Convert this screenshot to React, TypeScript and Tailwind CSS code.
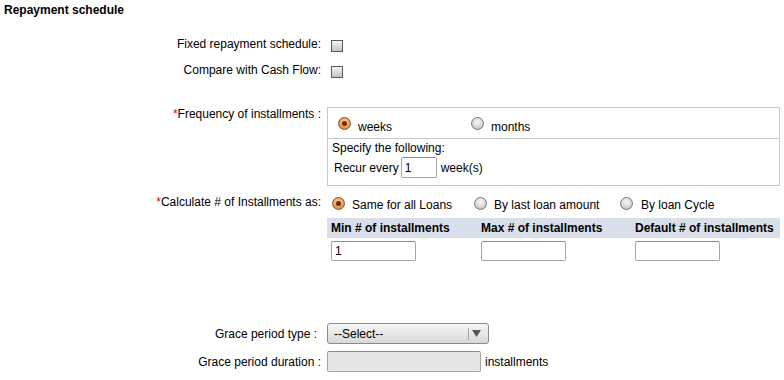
import React from "react";

const Radio = ({ checked }: { checked?: boolean }) =>
  checked ? (
    <span className="relative block h-[13px] w-[13px] shrink-0 rounded-full border border-[#6e5a4a] bg-[radial-gradient(circle_at_50%_40%,#ffd9b5,#f08a3a_70%,#c9661f)]">
      <span className="absolute left-[3px] top-[3px] h-[5px] w-[5px] rounded-full bg-[#6a2c05]" />
    </span>
  ) : (
    <span className="block h-[13px] w-[13px] shrink-0 rounded-full border border-[#767676] bg-[radial-gradient(circle_at_50%_35%,#fafafa,#d4d4d4_60%,#b0b0b0)]" />
  );

const Checkbox = () => (
  <span className="block h-[12px] w-[12px] shrink-0 border border-[#5a5a5a] bg-[linear-gradient(#f4f4f4,#c4c4c4)]" />
);

const TextBox = ({ value, className }: { value?: string; className: string }) => (
  <div
    className={
      "box-border flex items-center rounded-[2px] border border-[#a5a5a5] border-t-[#8a8a8a] bg-white pl-[3px] " +
      className
    }
  >
    {value}
  </div>
);

export default function App() {
  return (
    <div
      className="relative h-[380px] w-[784px] overflow-hidden bg-white text-[12px] leading-[14px] text-black"
      style={{ fontFamily: '"Liberation Sans", Arial, sans-serif' }}
    >
      <div className="h-[14px] pl-[4px] mt-[3px] font-bold">Repayment schedule</div>

      {/* Fixed repayment schedule */}
      <div className="mt-[20px] flex h-[15px] items-start">
        <div className="w-[321px] text-right">Fixed repayment schedule:</div>
        <div className="ml-[10px] mt-[3px]">
          <Checkbox />
        </div>
      </div>

      {/* Compare with cash flow */}
      <div className="mt-[11px] flex h-[15px] items-start">
        <div className="w-[321px] text-right">Compare with Cash Flow:</div>
        <div className="ml-[10px] mt-[3px]">
          <Checkbox />
        </div>
      </div>

      {/* Frequency */}
      <div className="mt-[29px] flex items-start">
        <div className="w-[321px] text-right">
          <span className="text-[#e00000]">*</span>Frequency of installments :
        </div>
        <div className="ml-[6px] box-border h-[79px] w-[453px] border border-[#c8c8c8]">
          <div className="box-border flex h-[31px] items-start border-b border-[#c8c8c8] pl-[10px] pt-[9px]">
            <div className="flex w-[133px] items-start">
              <Radio checked />
              <span className="ml-[7px] mt-[3px]">weeks</span>
            </div>
            <div className="flex items-start">
              <Radio />
              <span className="ml-[7px] mt-[3px]">months</span>
            </div>
          </div>
          <div className="pl-[4px] pt-[2px]">
            <div className="h-[14px]">Specify the following:</div>
            <div className="mt-[2px] flex items-center pl-[2px]">
              <span>Recur every</span>
              <TextBox value="1" className="ml-[2px] h-[21px] w-[36px]" />
              <span className="ml-[4px]">week(s)</span>
            </div>
          </div>
        </div>
      </div>

      {/* Calculate */}
      <div className="mt-[9px] flex items-start">
        <div className="w-[321px] text-right">
          <span className="text-[#e00000]">*</span>Calculate # of Installments as:
        </div>
        <div className="ml-[6px] w-[453px]">
          <div className="flex h-[23px] items-start pl-[5px] pt-[2px]">
            <div className="flex w-[142px] items-start">
              <Radio checked />
              <span className="ml-[7px] mt-[1px]">Same for all Loans</span>
            </div>
            <div className="flex w-[146px] items-start">
              <Radio />
              <span className="ml-[7px] mt-[1px]">By last loan amount</span>
            </div>
            <div className="flex items-start">
              <Radio />
              <span className="ml-[8px] mt-[1px]">By loan Cycle</span>
            </div>
          </div>
          <div className="flex h-[20px] items-center bg-[#d8deea] pl-[4px] font-bold">
            <div className="w-[150px]">Min # of installments</div>
            <div className="w-[154px]">Max # of installments</div>
            <div>Default # of installments</div>
          </div>
          <div className="mt-[3px] flex pl-[4px]">
            <div className="w-[150px]">
              <TextBox value="1" className="h-[20px] w-[85px]" />
            </div>
            <div className="w-[154px]">
              <TextBox className="h-[20px] w-[85px]" />
            </div>
            <div>
              <TextBox className="h-[20px] w-[85px]" />
            </div>
          </div>
        </div>
      </div>

      {/* Grace period type */}
      <div className="mt-[62px] flex items-center">
        <div className="w-[321px] pr-[4px] text-right">Grace period type :</div>
        <div className="ml-[6px] box-border flex h-[21px] w-[162px] items-center rounded-[3px] border border-[#8a8a8a] bg-[linear-gradient(#f6f6f6,#d8d8d8)] pl-[6px]">
          <span className="flex-1">--Select--</span>
          <span className="h-[12px] w-px bg-[#a8a8a8]" />
          <svg width="9" height="7" viewBox="0 0 9 7" className="ml-[3px] mr-[7px]">
            <path d="M0 0H9L4.5 7Z" fill="#555" />
          </svg>
        </div>
      </div>

      {/* Grace period duration */}
      <div className="mt-[7px] flex items-center">
        <div className="w-[321px] text-right">Grace period duration :</div>
        <div className="ml-[6px] box-border h-[21px] w-[154px] rounded-[2px] border border-[#a5a5a5] border-t-[#8a8a8a] bg-[#e6e6e6]" />
        <span className="ml-[4px]">installments</span>
      </div>
    </div>
  );
}
